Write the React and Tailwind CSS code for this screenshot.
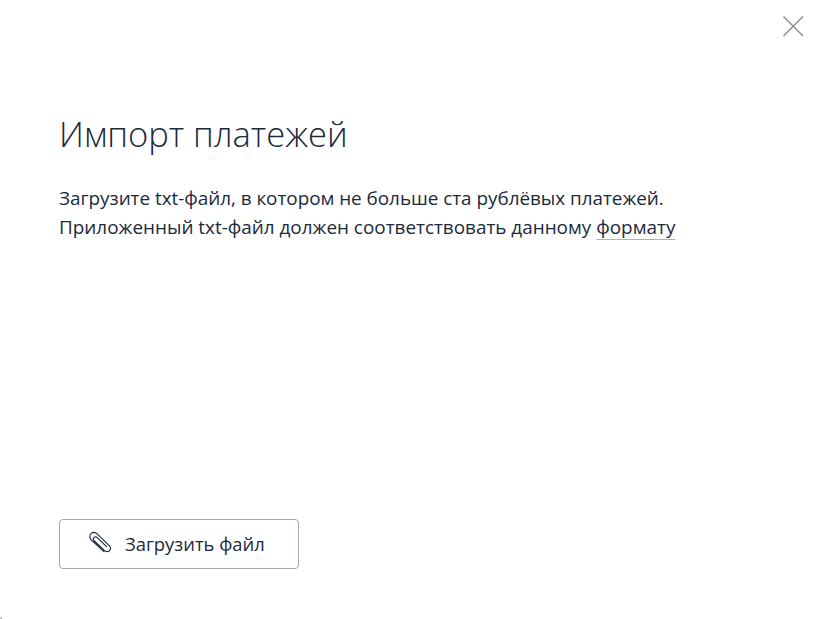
const font = "font-['Open_Sans',sans-serif]";

function PaperclipIcon() {
  return (
    <svg width="24" height="24" viewBox="0 0 24 24" fill="none" stroke="#1b2a3d" strokeWidth="1.1" strokeLinecap="round" className="-translate-y-[1px]">
      <path d="M16 20.6 L3.4 9 C1.4 7 1.3 4.2 3 2.6 C4.7 1 7.4 1.2 9.4 3.1 L21 14.4 C22.7 16 22.8 18.2 21.5 19.6 C20.2 21 18 21 16.3 19.4 L6.4 10 C5.2 8.8 5.2 7.4 6.1 6.5 C7 5.6 8.4 5.7 9.5 6.8 L18.6 15.6" />
    </svg>
  );
}

export default function App() {
  return (
    <div className={`relative flex h-[619px] w-[817px] flex-col overflow-hidden bg-white pl-[59px] text-[#1b2a3d] ${font}`}>
      <button type="button" className="absolute right-[13px] top-[15px] text-[#7b8794]">
        <svg width="22" height="22" viewBox="0 0 22 22" stroke="currentColor" strokeWidth="1.2">
          <path d="M1.5 1.5 L21 21 M21 1.5 L1.5 21" />
        </svg>
      </button>

      <h1 className="mt-[109px] text-[34.5px] font-light leading-[50px]">Импорт платежей</h1>

      <p className="mt-[25px] text-[18.9px] leading-[29px]">
        <span className="tracking-[-0.03px]">Загрузите txt-файл, в котором не больше ста рублёвых платежей.</span>
        <br />
        Приложенный txt-файл должен соответствовать данному{' '}
        <span className="underline decoration-[#a9b2bd] decoration-1 underline-offset-[5px] [text-decoration-skip-ink:none]">формату</span>
      </p>

      <button
        type="button"
        className="mt-auto mb-[50px] flex h-[50px] w-[240px] items-center rounded-[4px] border border-[#9fa9b5] pl-[28px] text-[18.4px]"
      >
        <PaperclipIcon />
        <span className="ml-[13px]">Загрузить файл</span>
      </button>

      <span className="absolute bottom-0 left-0 h-[2px] w-[2px] bg-[#c4c9cf]" />
    </div>
  );
}
